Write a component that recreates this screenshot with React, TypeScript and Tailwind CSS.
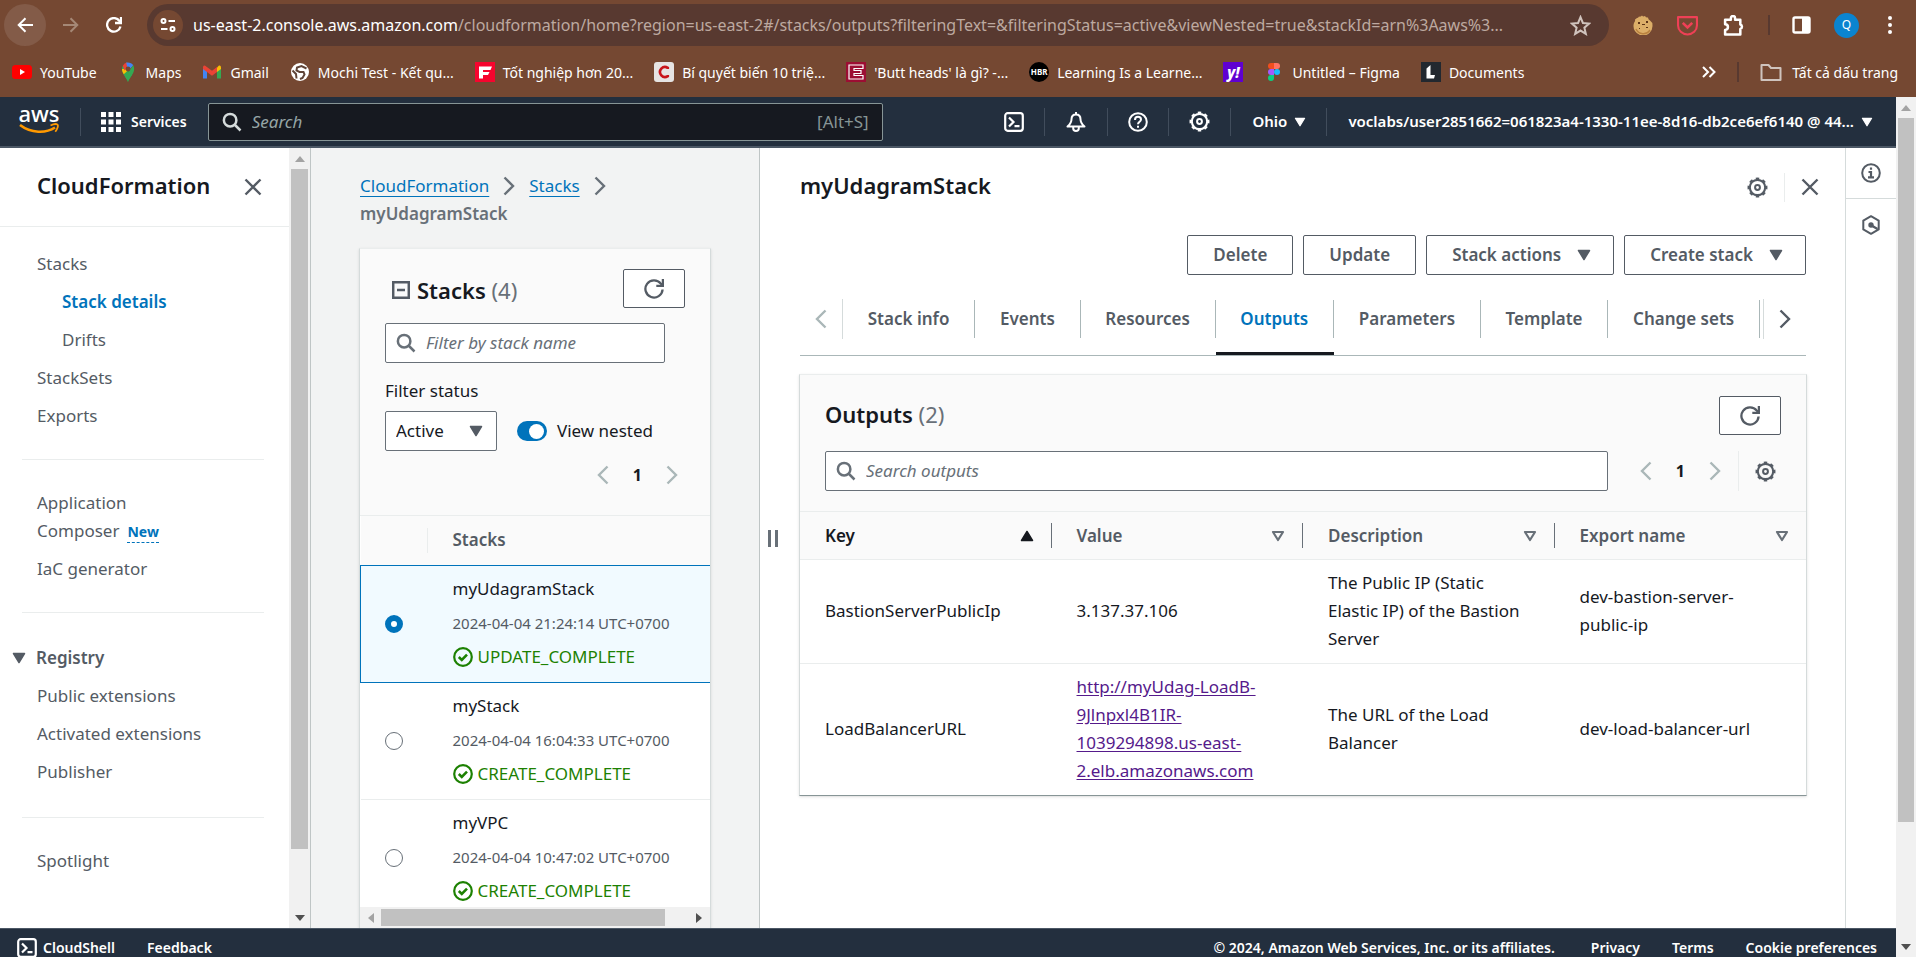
import type { ReactNode } from "react";

type IconProps = { className?: string };

/* ---------- icons ---------- */

const Search = ({ className = "" }: IconProps) => (
  <svg viewBox="0 0 16 16" className={`size-5 shrink-0 fill-none stroke-current stroke-2 ${className}`}>
    <circle cx="6.500" cy="6.500" r="5" />
    <path d="m10.200 10.200 4.600 4.600" />
  </svg>
);

const Gear = () => (
  <svg viewBox="0 0 20 20" className="size-[21px] shrink-0 fill-none stroke-current">
    <circle cx="10" cy="10" r="7.300" strokeWidth="2" />
    <circle cx="10" cy="10" r="8.600" strokeWidth="1.800" pathLength="16" strokeDasharray="1 1" strokeDashoffset="0.500" />
    <circle cx="10" cy="10" r="2.300" strokeWidth="1.900" />
  </svg>
);

const Close = ({ className = "" }: IconProps) => (
  <svg viewBox="0 0 18 18" className={`size-[18px] fill-none stroke-current stroke-[2.4] ${className}`}>
    <path d="m1.500 1.500 15 15M16.500 1.500l-15 15" />
  </svg>
);

const ChevronLeft = ({ className = "" }: IconProps) => (
  <svg viewBox="0 0 12 20" className={`h-5 w-3 shrink-0 fill-none stroke-current stroke-[2.4] ${className}`}>
    <path d="M10.500 1.500 2 10l8.500 8.500" />
  </svg>
);

const ChevronRight = ({ className = "" }: IconProps) => (
  <svg viewBox="0 0 12 20" className={`h-5 w-3 shrink-0 fill-none stroke-current stroke-[2.4] ${className}`}>
    <path d="M1.500 1.500 10 10l-8.500 8.500" />
  </svg>
);

const Caret = ({ className = "" }: IconProps) => (
  <svg viewBox="0 0 14 12" className={`h-3 w-[14px] shrink-0 fill-current stroke-current ${className}`}>
    <path d="M1.500 1.500h11L7 10.500z" strokeWidth="1.500" strokeLinejoin="round" />
  </svg>
);

const SortUp = () => (
  <svg viewBox="0 0 14 12" className="h-3 w-[14px] fill-current stroke-current">
    <path d="M1.500 10.500h11L7 1.500z" strokeWidth="1.500" strokeLinejoin="round" />
  </svg>
);

const SortDown = () => (
  <svg viewBox="0 0 14 12" className="h-3 w-[14px] fill-none stroke-[#687078]">
    <path d="M2 2h10L7 10z" strokeWidth="2.200" strokeLinejoin="round" />
  </svg>
);

const Refresh = () => (
  <svg viewBox="0 0 20 20" className="size-5 fill-none stroke-current stroke-[2.300]">
    <path d="M18.600 10.500A8.600 8.600 0 1 1 16.800 4.600L19 6.200" />
    <path d="M18.900 0v6.800H12.300" />
  </svg>
);

const Terminal = () => (
  <svg viewBox="0 0 20 20" className="size-5 shrink-0 fill-none stroke-current">
    <rect x="1.200" y="1.200" width="17.600" height="17.600" rx="2.500" strokeWidth="2.200" />
    <path d="m5 5.500 4.500 4.500L5 14.500M10.500 14.200h5" strokeWidth="2.200" />
  </svg>
);

const Bell = () => (
  <svg viewBox="0 0 20 20" className="size-5 fill-none stroke-current stroke-2">
    <path d="M10 0v2.500M10 2.500c-3 0-4.500 2-4.500 4.800 0 3.400-1.300 5-4 7.200h17c-2.700-2.200-4-3.800-4-7.200 0-2.800-1.500-4.800-4.500-4.800z" strokeLinejoin="round" />
    <path d="M7.200 15v1.200a2.800 2.800 0 0 0 5.600 0V15" />
  </svg>
);

const Help = () => (
  <svg viewBox="0 0 20 20" className="size-5 fill-none stroke-current stroke-2">
    <circle cx="10" cy="10" r="8.800" />
    <path d="M7 8c0-2 1.300-3.200 3-3.200S13 6 13 7.500c0 2.200-3 2.200-3 4.700M10 13.700v2.100" />
  </svg>
);

const StatusCheck = () => (
  <svg viewBox="0 0 20 20" className="size-5 shrink-0 fill-none stroke-current">
    <circle cx="10" cy="10" r="8.800" strokeWidth="2.200" />
    <path d="m5.800 10 3 3 5.200-5.300" strokeWidth="2.600" />
  </svg>
);

const CollapseBox = () => (
  <svg viewBox="0 0 18 18" className="size-[18px] fill-none stroke-current stroke-[2.500]">
    <path d="M1.200 1.200h15.600v15.600H1.200zM5 9h8" />
  </svg>
);

/* ---------- browser chrome ---------- */

const bookmarks: { label: string; icon: ReactNode }[] = [
  {
    label: "YouTube",
    icon: (
      <svg viewBox="0 0 20 20" className="size-5">
        <rect y="3" width="20" height="14" rx="3.500" fill="#f00" />
        <path d="M8 7v6l5-3z" fill="#fff" />
      </svg>
    ),
  },
  {
    label: "Maps",
    icon: (
      <svg viewBox="0 0 20 20" className="size-5">
        <path d="M10 20C9.200 16.500 4 12.500 4 7a6.500 6.500 0 0 1 .8-3.200L14 13c-1.600 2.500-3.300 4.300-4 7z" fill="#34a853" />
        <path d="M4 7c0 2 .8 3.800 1.800 5.200L15.500 3 10 7z" fill="#fbbc04" />
        <path d="M4.800 3.800A6.500 6.500 0 0 1 8.600.6L12 4 6.500 8.500z" fill="#ea4335" />
        <path d="M8.200.6C11 0 13.800 1 15.200 3.200L10 9z" fill="#4285f4" />
        <path d="M15.200 3.200C17 6.500 16 10 14 13c-1.600 2.500-3.300 4.300-4 7-.7-2.500-2-4-3-5.500z" fill="#34a853" />
        <circle cx="10" cy="7" r="2.400" fill="#754832" />
      </svg>
    ),
  },
  {
    label: "Gmail",
    icon: (
      <svg viewBox="0 0 20 20" className="size-5">
        <path d="M1 5v11.500h4V8z" fill="#4285f4" />
        <path d="M19 5v11.500h-4V8z" fill="#34a853" />
        <path d="M15 5.500 17 3.500q2-.5 2 2V7l-4 3z" fill="#fbbc04" />
        <path d="M1 7V5.500q0-2.500 2.200-1.800L10 8.800l5-3.700V10l-5 3.700L5 10z" fill="#ea4335" />
      </svg>
    ),
  },
  {
    label: "Mochi Test - Kết qu...",
    icon: (
      <svg viewBox="0 0 20 20" className="size-5">
        <circle cx="10" cy="10" r="9" fill="#fff" />
        <path d="M2.500 8.500 6 12l.5 4.500M16.500 6.500 11.500 4 7 5.500l-.5 3 3 1.500h4l1 2.500-2 3.500-2.500 1" fill="none" stroke="#5f4438" strokeWidth="2" />
      </svg>
    ),
  },
  {
    label: "Tốt nghiệp hơn 20...",
    icon: (
      <svg viewBox="0 0 20 20" className="size-5">
        <path d="M0 0h20v20H0z" fill="#f6052e" />
        <path d="M4 4.500h13L15.500 8H8v2h6.500L13 13H8v3.500H4z" fill="#fff" />
      </svg>
    ),
  },
  {
    label: "Bí quyết biến 10 triệ...",
    icon: (
      <svg viewBox="0 0 20 20" className="size-5">
        <rect width="20" height="20" rx="3" fill="#e6e4e3" />
        <path d="M13.800 7V5.800a5 5 0 1 0 0 8.400V13" fill="none" stroke="#c8151b" strokeWidth="2.600" />
      </svg>
    ),
  },
  {
    label: "'Butt heads' là gì? -...",
    icon: (
      <svg viewBox="0 0 20 20" className="size-5">
        <path d="M0 0h20v20H0z" fill="#9c0e33" />
        <path d="M17 3H3v14h14v-3.500H8v-2h7v-3H8v-2h9z" fill="none" stroke="#fff" strokeWidth="1.200" />
      </svg>
    ),
  },
  {
    label: "Learning Is a Learne...",
    icon: (
      <span className="flex size-5 items-center justify-center rounded-full bg-black text-[8px] leading-none font-bold text-white">HBR</span>
    ),
  },
  {
    label: "",
    icon: (
      <span className="flex size-5 items-center justify-center bg-[#5f01d1] text-[15px] leading-none font-extrabold text-white italic">y!</span>
    ),
  },
  {
    label: "Untitled – Figma",
    icon: (
      <svg viewBox="0 0 20 20" className="size-5">
        <path d="M10 1H7a3 3 0 0 0 0 6h3z" fill="#f24e1e" />
        <path d="M10 1h3a3 3 0 0 1 0 6h-3z" fill="#ff7262" />
        <path d="M10 7H7a3 3 0 0 0 0 6h3z" fill="#a259ff" />
        <circle cx="13" cy="10" r="3" fill="#1abcfe" />
        <path d="M10 13H7a3 3 0 1 0 3 3z" fill="#0acf83" />
      </svg>
    ),
  },
  {
    label: "Documents",
    icon: (
      <svg viewBox="0 0 20 20" className="size-5">
        <path d="M0 0h20v20H0z" fill="#22282f" />
        <path d="M5.500 6.500 9.500 3v10h4.500l-1 3.500H5.500z" fill="#fff" />
      </svg>
    ),
  },
];

function BrowserChrome() {
  return (
    <div className="shrink-0 bg-[#754832] text-white">
      <div className="flex h-[50px] items-center pl-1">
        <button aria-label="Back" className="flex size-[42px] items-center justify-center rounded-full bg-[#835b48]">
          <svg viewBox="0 0 16 16" className="size-4 fill-none stroke-current stroke-2">
            <path d="M16 8H2M8.500 1.200 1.700 8l6.800 6.800" />
          </svg>
        </button>
        <button aria-label="Forward" className="ml-1 flex size-[42px] items-center justify-center text-[#a58876]">
          <svg viewBox="0 0 16 16" className="size-4 fill-none stroke-current stroke-2">
            <path d="M0 8h14M7.500 1.200 14.300 8l-6.800 6.800" />
          </svg>
        </button>
        <button aria-label="Reload" className="ml-px flex size-[42px] items-center justify-center">
          <svg viewBox="0 0 16 16" className="size-4 fill-none stroke-current stroke-[2.300]">
            <path d="M14.500 9.500A6.800 6.800 0 1 1 13.500 4L15 5.500" />
            <path d="M15 0v6H9" />
          </svg>
        </button>
        <div className="ml-3 flex h-[42px] min-w-0 flex-1 items-center rounded-full bg-[#583930] pr-[18px] pl-[6px]">
          <button aria-label="Site information" className="flex size-[30px] shrink-0 items-center justify-center rounded-full bg-[#754832]">
            <svg viewBox="0 0 16 14" className="h-[14px] w-4 fill-none stroke-current stroke-2">
              <circle cx="3.500" cy="3" r="2" />
              <path d="M8.500 3H15M1 11h6.500" />
              <circle cx="12.500" cy="11" r="2" />
            </svg>
          </button>
          <div className="ml-[10px] min-w-0 flex-1 overflow-hidden text-[16px] whitespace-nowrap text-[#bda9a0]">
            <span className="text-white">us-east-2.console.aws.amazon.com</span>
            /cloudformation/home?region=us-east-2#/stacks/outputs?filteringText=&amp;filteringStatus=active&amp;viewNested=true&amp;stackId=arn%3Aaws%3...
          </div>
          <button aria-label="Bookmark" className="ml-4 shrink-0 text-[#d0c3bd]">
            <svg viewBox="0 0 20 20" className="size-[21px] fill-none stroke-current stroke-[1.900]">
              <path d="m10 2 2.300 5.600 6 .5-4.600 4 1.400 5.900L10 14.800 4.900 18l1.400-5.900-4.600-4 6-.5z" />
            </svg>
          </button>
        </div>
        <div className="ml-6 flex items-center">
          <button aria-label="Cookies">
            <svg viewBox="0 0 20 20" className="size-5">
              <path d="M4 3Q5 3 6 1.500 8 2 9 .5 10 2 12 1q1 2 3 1.500 0 2 2 3 2.500 1.500 2.500 5A9.500 9.500 0 1 1 1 8Q2.500 6 2 4.500z" fill="#dcae68" />
              <path d="M3 14a8 8 0 0 0 14 1" fill="none" stroke="#b9813f" strokeWidth="1.500" />
              <path d="M5 7h2v2H5zM9 9h3v1H9zM13 6h2v2h-2zM6 13h1v1H6zM13 12h2v1h-2z" fill="#5d3417" />
            </svg>
          </button>
          <button aria-label="Pocket" className="ml-6 text-[#ef4056]">
            <svg viewBox="0 0 20 20" className="size-[21px] fill-none stroke-current stroke-2">
              <path d="M1 2h18v8a9 8.500 0 0 1-18 0z" strokeLinejoin="round" />
              <path d="m5.500 7.500 4.500 4.300 4.500-4.300" strokeWidth="2.500" />
            </svg>
          </button>
          <button aria-label="Extensions" className="ml-[25px]">
            <svg viewBox="0 0 20 20" className="size-[21px] fill-none stroke-current stroke-[2.400]">
              <path d="M2 4.500h5.500V3a2 2 0 0 1 4 0v1.500h5V9a2.200 2.200 0 0 1 0 4.200v5.300H2v-4.300a2.700 2.700 0 0 0 0-5.400z" strokeLinejoin="round" />
            </svg>
          </button>
          <span className="ml-6 h-5 w-[2px] bg-[#583930]" />
          <button aria-label="Side panel" className="ml-[22px]">
            <svg viewBox="0 0 20 18" className="h-[18px] w-5">
              <rect x="1.500" y="1.500" width="16" height="15" rx="1.500" className="fill-none stroke-white" strokeWidth="2.400" />
              <path d="M10 1h8v16h-8z" fill="#fff" />
            </svg>
          </button>
          <button className="ml-[22px] flex size-[25px] items-center justify-center rounded-full bg-[#0a84d0] text-[12px]">Q</button>
          <button aria-label="Menu" className="mr-6 ml-[29px]">
            <svg viewBox="0 0 4 18" className="h-[18px] w-1 fill-current">
              <circle cx="2" cy="2" r="2" />
              <circle cx="2" cy="9" r="2" />
              <circle cx="2" cy="16" r="2" />
            </svg>
          </button>
        </div>
      </div>
      <div className="flex h-[47px] items-center justify-between pr-[18px] pb-[3px] pl-3 text-[14px]">
        <div className="flex items-center gap-[21px]">
          {bookmarks.map((b, i) => (
            <a key={i} href="#" className="flex items-center gap-2 whitespace-nowrap">
              {b.icon}
              {b.label && <span>{b.label}</span>}
            </a>
          ))}
        </div>
        <div className="flex items-center">
          <svg viewBox="0 0 14 12" className="h-3 w-[14px] fill-none stroke-current stroke-2">
            <path d="m1 1 5 5-5 5M7.500 1l5 5-5 5" />
          </svg>
          <span className="mx-[21px] h-5 w-[2px] bg-[#583930]" />
          <a href="#" className="flex items-center gap-[10px]">
            <svg viewBox="0 0 22 18" className="h-[18px] w-[22px] fill-none stroke-[#cfc3bd] stroke-2">
              <path d="M1.500 2h7l2.500 3h9.500v12h-19z" strokeLinejoin="round" />
            </svg>
            <span>Tất cả dấu trang</span>
          </a>
        </div>
      </div>
    </div>
  );
}

/* ---------- console header ---------- */

const Divider = () => <span className="h-7 w-px shrink-0 bg-[#414d5c]" />;

function ConsoleHeader() {
  return (
    <header className="flex h-[51px] shrink-0 items-center border-b-2 border-[#4b5765] bg-[#232f3e] text-[15px] font-semibold text-white">
      <a href="#" className="ml-[19px] flex w-10 flex-col items-center">
        <span className="h-[15px] text-[22px] leading-[11px] font-medium">aws</span>
        <svg viewBox="0 0 40 12" className="h-3 w-10 fill-none stroke-[#ff9900]">
          <path d="M1 2c11 8.500 26 8.500 35 2.500" strokeWidth="2.600" />
          <path d="M31.500 2.500c3-1.500 6-1.700 7-.8s0 4.300-2.200 7" strokeWidth="1.800" />
        </svg>
      </a>
      <span className="ml-[21px] h-7 w-px bg-[#414d5c]" />
      <button className="ml-5 flex items-center gap-[10px] text-[14px]">
        <svg viewBox="0 0 20 20" className="size-5 fill-current">
          <path d="M0 0h5v5H0zM7.500 0h5v5h-5zM15 0h5v5h-5zM0 7.500h5v5H0zM7.500 7.500h5v5h-5zM15 7.500h5v5h-5zM0 15h5v5H0zM7.500 15h5v5h-5zM15 15h5v5h-5z" />
        </svg>
        Services
      </button>
      <label className="ml-[21px] flex h-[38px] w-[675px] items-center rounded-[2px] border border-[#879596] bg-[#161920] px-[13px] font-normal">
        <Search className="text-[#d5dbdb]" />
        <input
          type="search"
          aria-label="Search"
          placeholder="Search"
          className="ml-[10px] min-w-0 flex-1 bg-transparent text-[17px] outline-none placeholder:text-[#95a5a6] placeholder:italic"
        />
        <span className="text-[17px] text-[#879596]">[Alt+S]</span>
      </label>
      <div className="ml-auto flex items-center">
        <button aria-label="CloudShell" className="mr-5">
          <Terminal />
        </button>
        <Divider />
        <button aria-label="Notifications" className="mx-[21px]">
          <Bell />
        </button>
        <Divider />
        <button aria-label="Help" className="mx-5">
          <Help />
        </button>
        <Divider />
        <button aria-label="Settings" className="mx-5">
          <Gear />
        </button>
        <Divider />
        <button className="mr-[19px] ml-[21px] flex items-center gap-[6px]">
          Ohio
          <Caret className="h-[10px]" />
        </button>
        <Divider />
        <button className="mr-[22px] ml-[21px] flex items-center gap-[6px]">
          voclabs/user2851662=061823a4-1330-11ee-8d16-db2ce6ef6140 @ 44...
          <Caret className="h-[10px]" />
        </button>
      </div>
    </header>
  );
}

/* ---------- scroll bars ---------- */

function ScrollColumn({ thumb, className = "" }: { thumb: string; className?: string }) {
  return (
    <div aria-hidden="true" className={`flex shrink-0 flex-col items-center bg-[#f1f1f1] px-[2px] ${className}`}>
      <span className="flex h-[21px] shrink-0 items-center text-[#a3a3a3]">
        <svg viewBox="0 0 10 6" className="h-[6px] w-[10px] fill-current">
          <path d="M5 0 10 6H0z" />
        </svg>
      </span>
      <span className={`w-full bg-[#c1c1c1] ${thumb}`} />
      <span className="mt-auto flex h-[21px] shrink-0 items-center text-[#505050]">
        <svg viewBox="0 0 10 6" className="h-[6px] w-[10px] fill-current">
          <path d="M5 6 10 0H0z" />
        </svg>
      </span>
    </div>
  );
}

/* ---------- sidebar ---------- */

const NavItem = ({ children }: { children: ReactNode }) => (
  <li>
    <a href="#">{children}</a>
  </li>
);

const Rule = () => <hr className="my-[29px] mr-[25px] ml-[22px] border-[#eaeded]" />;

function Sidebar() {
  return (
    <nav className="flex w-[311px] shrink-0 border-r border-[#bfc5c5] bg-white">
      <div className="min-w-0 flex-1 overflow-hidden text-[17px] leading-[28px] text-[#545b64]">
        <div className="flex h-[79px] items-center justify-between border-b border-[#eaeded] pr-[27px] pl-[37px]">
          <h2 className="pb-1 text-[22px] font-semibold text-[#16191f]">CloudFormation</h2>
          <button aria-label="Close navigation" className="text-[#545b64]">
            <Close />
          </button>
        </div>
        <ul className="mt-[23px] flex flex-col gap-[10px] pl-[37px]">
          <NavItem>Stacks</NavItem>
          <li className="pl-[25px] font-semibold text-[#0073bb]">
            <a href="#">Stack details</a>
          </li>
          <li className="pl-[25px]">
            <a href="#">Drifts</a>
          </li>
          <NavItem>StackSets</NavItem>
          <NavItem>Exports</NavItem>
        </ul>
        <Rule />
        <ul className="flex flex-col gap-[10px] pl-[37px]">
          <li>
            <a href="#">
              Application
              <br />
              Composer
            </a>
            <button className="ml-2 border-b border-dashed border-[#0073bb] text-[14px] leading-5 font-bold text-[#0073bb]">New</button>
          </li>
          <NavItem>IaC generator</NavItem>
        </ul>
        <Rule />
        <div className="py-[2px]">
          <button className="flex items-center gap-[10px] pl-3 font-semibold">
            <Caret />
            Registry
          </button>
          <ul className="mt-[10px] flex flex-col gap-[10px] pl-[37px]">
            <NavItem>Public extensions</NavItem>
            <NavItem>Activated extensions</NavItem>
            <NavItem>Publisher</NavItem>
          </ul>
        </div>
        <Rule />
        <ul className="pl-[37px]">
          <NavItem>Spotlight</NavItem>
        </ul>
      </div>
      <ScrollColumn className="w-[21px]" thumb="h-[680px]" />
    </nav>
  );
}

/* ---------- stack list ---------- */

const stacks = [
  { name: "myUdagramStack", date: "2024-04-04 21:24:14 UTC+0700", status: "UPDATE_COMPLETE" },
  { name: "myStack", date: "2024-04-04 16:04:33 UTC+0700", status: "CREATE_COMPLETE" },
  { name: "myVPC", date: "2024-04-04 10:47:02 UTC+0700", status: "CREATE_COMPLETE" },
];

const iconButton = "flex h-[39px] w-[62px] items-center justify-center rounded-[2px] border border-[#545b64] bg-white text-[#545b64]";

function StackList() {
  return (
    <section className="flex w-[448px] shrink-0 flex-col bg-[#f2f3f3] px-[49px] text-[17px] leading-[28px] text-[#16191f]">
      <div className="mt-6 flex flex-wrap items-center">
        <a href="#" className="text-[#0073bb] underline decoration-1 underline-offset-4">
          CloudFormation
        </a>
        <ChevronRight className="mx-[14px] text-[#687078]" />
        <a href="#" className="text-[#0073bb] underline decoration-1 underline-offset-4">
          Stacks
        </a>
        <ChevronRight className="ml-[14px] text-[#687078]" />
        <span className="w-full font-semibold text-[#687078]">myUdagramStack</span>
      </div>
      <div className="-mx-px mt-5 flex min-h-0 flex-1 flex-col overflow-hidden border border-b-0 border-[#d5dbdb] border-t-[#eaeded] bg-white shadow-sm">
        <div className="h-[267px] shrink-0 border-b border-[#eaeded] bg-[#fafafa] px-[25px]">
          <div className="mt-5 flex items-start justify-between">
            <div className="mt-[7px] flex items-center gap-[7px] pl-[7px] text-[#545b64]">
              <CollapseBox />
              <h2 className="text-[22px] font-semibold text-[#16191f]">
                Stacks <span className="font-normal text-[#687078]">(4)</span>
              </h2>
            </div>
            <button aria-label="Refresh stacks" className={iconButton}>
              <Refresh />
            </button>
          </div>
          <label className="mt-[15px] mr-5 flex h-10 items-center rounded-[2px] border border-[#687078] bg-white px-[10px] text-[#687078]">
            <Search />
            <input
              aria-label="Filter by stack name"
              placeholder="Filter by stack name"
              className="ml-[10px] min-w-0 flex-1 bg-transparent outline-none placeholder:text-[#687078] placeholder:italic"
            />
          </label>
          <label htmlFor="status" className="mt-[14px] block">
            Filter status
          </label>
          <div className="mt-[6px] flex items-center">
            <div className="grid w-28 items-center">
              <select
                id="status"
                className="col-start-1 row-start-1 h-10 appearance-none rounded-[2px] border border-[#687078] bg-white pl-[10px] outline-none"
              >
                <option>Active</option>
                <option>Deleted</option>
              </select>
              <Caret className="pointer-events-none col-start-1 row-start-1 mr-[14px] justify-self-end text-[#545b64]" />
            </div>
            <label className="ml-5 flex items-center gap-[10px]">
              <input
                type="checkbox"
                role="switch"
                defaultChecked
                className="flex h-5 w-[30px] appearance-none items-center justify-end rounded-full bg-[#0073bb] px-[3px] before:size-[15px] before:rounded-full before:bg-white"
              />
              View nested
            </label>
          </div>
          <div className="mt-[10px] flex items-center justify-end pr-[7px] text-[#aab7b8]">
            <button aria-label="Previous page">
              <ChevronLeft />
            </button>
            <span className="mx-6 text-[16px] font-bold text-[#16191f]">1</span>
            <button aria-label="Next page">
              <ChevronRight />
            </button>
          </div>
        </div>
        <div className="min-h-0 flex-1 overflow-hidden">
          <table className="w-full border-collapse text-left">
            <thead>
              <tr className="h-[49px] bg-[#fafafa] text-[#545b64]">
                <th className="w-[67px]">
                  <span className="block h-[25px] w-full border-r border-[#eaeded]" />
                </th>
                <th className="pl-[25px] font-semibold">Stacks</th>
              </tr>
            </thead>
            <tbody>
              {stacks.map((s, i) => (
                <tr
                  key={s.name}
                  className={
                    i === 0
                      ? "border-y border-l border-[#0073bb] bg-[#f1faff]"
                      : "border-b border-[#eaeded] bg-white"
                  }
                >
                  <td className="pl-6">
                    <input
                      type="radio"
                      name="stack"
                      aria-label={s.name}
                      defaultChecked={i === 0}
                      className="block size-[18px] appearance-none rounded-full border border-[#687078] bg-white checked:border-[6px] checked:border-[#0073bb]"
                    />
                  </td>
                  <td className="pt-[9px] pb-[11px] pl-[25px]">
                    <div className="flex flex-col gap-[6px]">
                      <span>{s.name}</span>
                      <span className="text-[15px] text-[#545b64]">{s.date}</span>
                      <span className="flex items-center gap-[5px] text-[#1d8102]">
                        <StatusCheck />
                        {s.status}
                      </span>
                    </div>
                  </td>
                </tr>
              ))}
            </tbody>
          </table>
        </div>
        <div aria-hidden="true" className="flex h-[21px] shrink-0 items-center bg-[#f1f1f1]">
          <svg viewBox="0 0 6 10" className="ml-2 h-[10px] w-[6px] fill-[#a3a3a3]">
            <path d="M0 5 6 0v10z" />
          </svg>
          <span className="ml-[7px] h-[17px] w-[284px] bg-[#c1c1c1]" />
          <svg viewBox="0 0 6 10" className="mr-2 ml-auto h-[10px] w-[6px] fill-[#505050]">
            <path d="M6 5 0 0v10z" />
          </svg>
        </div>
      </div>
    </section>
  );
}

/* ---------- details ---------- */

const tabs = ["Stack info", "Events", "Resources", "Outputs", "Parameters", "Template", "Change sets"];

const outputs = [
  {
    key: "BastionServerPublicIp",
    value: "3.137.37.106",
    description: "The Public IP (Static Elastic IP) of the Bastion Server",
    exportName: "dev-bastion-server-public-ip",
  },
  {
    key: "LoadBalancerURL",
    value: "http://myUdag-LoadB-9Jlnpxl4B1IR-1039294898.us-east-2.elb.amazonaws.com",
    link: true,
    description: "The URL of the Load Balancer",
    exportName: "dev-load-balancer-url",
  },
];

const button =
  "h-10 rounded-[2px] border border-[#545b64] bg-white px-[25px] font-semibold text-[#545b64]";
const menuButton =
  "flex h-10 items-center gap-4 rounded-[2px] border border-[#545b64] bg-white pr-[22px] pl-[25px] font-semibold text-[#545b64]";

function Details() {
  return (
    <main className="flex min-w-0 flex-1 flex-col border-l border-[#bfc5c5] bg-white pr-[39px] text-[17px] leading-[28px] text-[#16191f]">
      <div className="flex flex-1">
        <div className="flex w-10 shrink-0 items-center gap-[4px] pl-2">
          <span className="h-[17px] w-[3px] bg-[#687078]" />
          <span className="h-[17px] w-[3px] bg-[#687078]" />
        </div>
        <div className="min-w-0 flex-1">
          <div className="mt-6 flex h-[30px] items-center">
            <h1 className="flex-1 pb-1 text-[22px] font-semibold">myUdagramStack</h1>
            <div className="-mr-[13px] flex items-center text-[#545b64]">
              <button aria-label="Preferences">
                <Gear />
              </button>
              <span className="mx-4 h-[29px] w-px bg-[#eaeded]" />
              <button aria-label="Close panel">
                <Close />
              </button>
            </div>
          </div>
          <div className="mt-[33px] flex justify-end gap-[10px]">
            <button className={button}>Delete</button>
            <button className={button}>Update</button>
            <button className={menuButton}>
              Stack actions
              <Caret />
            </button>
            <button className={menuButton}>
              Create stack
              <Caret />
            </button>
          </div>
          <div className="mt-6 flex h-[57px] items-start border-b border-[#aab7b8]">
            <button aria-label="Scroll tabs left" className="flex h-10 w-[43px] shrink-0 items-center justify-center border-r border-[#d5dbdb] text-[#aab7b8]">
              <ChevronLeft />
            </button>
            <div role="tablist" className="flex min-w-0 flex-1 self-stretch overflow-hidden font-semibold text-[#545b64]">
              {tabs.map((t) => (
                <button
                  key={t}
                  role="tab"
                  aria-selected={t === "Outputs"}
                  className="flex flex-auto items-start pt-px aria-selected:border-b-3 aria-selected:border-[#16191f] aria-selected:text-[#0073bb]"
                >
                  <span className="flex h-[38px] w-full items-center justify-center border-r border-[#aab7b8]">{t}</span>
                </button>
              ))}
            </div>
            <button aria-label="Scroll tabs right" className="ml-[3px] flex h-10 w-[43px] shrink-0 items-center justify-center border-l border-[#d5dbdb] text-[#545b64]">
              <ChevronRight />
            </button>
          </div>
          <section className="-mx-px mt-[18px] border border-[#d5dbdb] border-t-[#eaeded] border-b-[#879596] bg-white shadow-sm">
            <div className="bg-[#fafafa] px-[25px] pt-[21px] pb-5">
              <div className="flex items-start justify-between">
                <h2 className="pt-1 text-[22px] font-semibold">
                  Outputs <span className="font-normal text-[#687078]">(2)</span>
                </h2>
                <button aria-label="Refresh outputs" className={iconButton}>
                  <Refresh />
                </button>
              </div>
              <div className="mt-4 flex items-center text-[#aab7b8]">
                <label className="flex h-10 min-w-0 flex-1 items-center rounded-[2px] border border-[#687078] bg-white px-[10px] text-[#687078]">
                  <Search />
                  <input
                    aria-label="Search outputs"
                    placeholder="Search outputs"
                    className="ml-[10px] min-w-0 flex-1 bg-transparent outline-none placeholder:text-[#687078] placeholder:italic"
                  />
                </label>
                <button aria-label="Previous page" className="ml-8">
                  <ChevronLeft />
                </button>
                <span className="mx-6 text-[16px] font-bold text-[#16191f]">1</span>
                <button aria-label="Next page">
                  <ChevronRight />
                </button>
                <span className="mr-4 ml-[17px] h-10 w-px bg-[#eaeded]" />
                <button aria-label="Table preferences" className="mr-[5px] text-[#545b64]">
                  <Gear />
                </button>
              </div>
            </div>
            <table className="w-full table-fixed border-collapse text-left">
              <thead>
                <tr className="h-12 border-y border-[#eaeded] bg-[#fafafa] text-[#545b64]">
                  {["Key", "Value", "Description", "Export name"].map((h, i) => (
                    <th key={h} className={i === 0 ? "font-semibold text-[#16191f]" : "font-semibold"}>
                      <div
                        className={
                          i < 3
                            ? "flex h-[25px] items-center justify-between border-r border-[#687078] pr-[17px] pl-[25px]"
                            : "flex h-[25px] items-center justify-between pr-[17px] pl-[25px]"
                        }
                      >
                        {h}
                        {i === 0 ? <SortUp /> : <SortDown />}
                      </div>
                    </th>
                  ))}
                </tr>
              </thead>
              <tbody>
                {outputs.map((o) => (
                  <tr key={o.key} className="border-b border-[#eaeded] last:border-b-0">
                    <td className="px-[25px] pt-[9px] pb-[10px]">{o.key}</td>
                    <td className="px-[25px] pt-[9px] pb-[10px]">
                      {o.link ? (
                        <a href="#" className="text-[#551a8b] underline underline-offset-2">
                          {o.value}
                        </a>
                      ) : (
                        o.value
                      )}
                    </td>
                    <td className="px-[25px] pt-[9px] pb-[10px]">{o.description}</td>
                    <td className="px-[25px] pt-[9px] pb-[10px]">{o.exportName}</td>
                  </tr>
                ))}
              </tbody>
            </table>
          </section>
        </div>
      </div>
    </main>
  );
}

function ToolRail() {
  return (
    <aside className="flex w-[51px] shrink-0 flex-col border-l border-[#d5dbdb] bg-white text-[#545b64]">
      <button aria-label="Info" className="flex h-[51px] items-center justify-center border-b border-[#d5dbdb]">
        <svg viewBox="0 0 20 20" className="size-5 fill-none stroke-current stroke-2">
          <circle cx="10" cy="10" r="8.800" />
          <path d="M10 4.500v2.300M7.500 9H10v5M7 14.300h6" strokeWidth="2.200" />
        </svg>
      </button>
      <button aria-label="Resources" className="flex h-[51px] items-center justify-center">
        <svg viewBox="0 0 20 20" className="size-5 fill-none stroke-current stroke-2">
          <path d="m10 1.200 7.700 4.400v8.800L10 18.800l-7.700-4.400V5.600z" strokeLinejoin="round" />
          <circle cx="10" cy="10" r="2.700" className="fill-current stroke-none" />
          <path d="m10.500 10.500 6 3.500" strokeWidth="2.400" />
        </svg>
      </button>
    </aside>
  );
}

function Footer() {
  return (
    <footer className="flex h-[29px] shrink-0 items-start overflow-hidden border-t border-[#4b5765] bg-[#232f3e] px-[17px] pt-2 text-[14px] leading-[22px] font-semibold text-white">
      <button className="flex items-center gap-[6px]">
        <Terminal />
        CloudShell
      </button>
      <a href="#" className="ml-8">
        Feedback
      </a>
      <span className="ml-auto">© 2024, Amazon Web Services, Inc. or its affiliates.</span>
      <a href="#" className="ml-9">
        Privacy
      </a>
      <a href="#" className="ml-8">
        Terms
      </a>
      <a href="#" className="mr-[2px] ml-8">
        Cookie preferences
      </a>
    </footer>
  );
}

export default function App() {
  return (
    <div className="flex h-screen flex-col overflow-hidden bg-white font-['Noto_Sans','Open_Sans',sans-serif]">
      <BrowserChrome />
      <div className="flex min-h-0 flex-1">
        <div className="flex min-w-0 flex-1 flex-col">
          <ConsoleHeader />
          <div className="flex min-h-0 flex-1">
            <Sidebar />
            <StackList />
            <Details />
            <ToolRail />
          </div>
          <Footer />
        </div>
        <ScrollColumn className="w-5" thumb="h-[704px]" />
      </div>
    </div>
  );
}
